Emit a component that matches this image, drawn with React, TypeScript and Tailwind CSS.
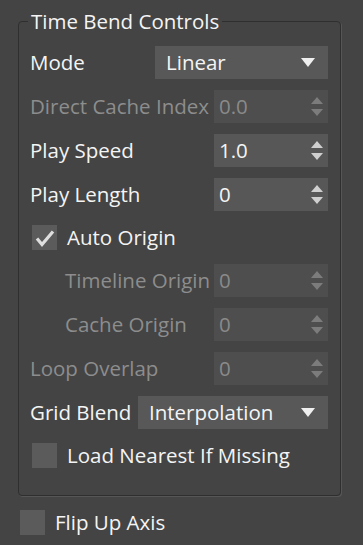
import React from 'react';

const SpinArrows = ({ dim }: { dim?: boolean }) => (
  <svg width="12" height="19" viewBox="0 0 12 19" className={dim ? 'fill-[#7c7c7c]' : 'fill-[#cfcfcf]'}>
    <polygon points="6,0 12,7 0,7" />
    <polygon points="0,12 12,12 6,19" />
  </svg>
);

const DropArrow = () => (
  <svg width="14" height="9" viewBox="0 0 14 9" className="fill-[#efefef]">
    <polygon points="0,0 14,0 7,9" />
  </svg>
);

function Spinner({ label, value, disabled, indent }: { label: string; value: string; disabled?: boolean; indent?: boolean }) {
  return (
    <div className="flex h-[33px] items-center">
      <span className={`flex-1 whitespace-nowrap ${indent ? 'pl-[35px]' : ''} ${disabled ? 'text-[#8d8d8d]' : 'text-[#f4f4f4]'}`}>
        {label}
      </span>
      <div className={`flex h-[33px] w-[114px] items-center justify-between pl-[5px] pr-[5px] ${disabled ? 'bg-[#4e4e4e] text-[#8a8a8a]' : 'bg-[#575757] text-[#f4f4f4]'}`}>
        <span>{value}</span>
        <SpinArrows dim={disabled} />
      </div>
    </div>
  );
}

function Dropdown({ label, value, width }: { label: string; value: string; width: string }) {
  return (
    <div className="flex h-[33px] items-center">
      <span className="flex-1 whitespace-nowrap text-[#f4f4f4]">{label}</span>
      <div className={`flex h-[33px] ${width} items-center justify-between bg-[#585858] pl-[11px] pr-[13px] text-[#f4f4f4]`}>
        <span>{value}</span>
        <DropArrow />
      </div>
    </div>
  );
}

function Check({ label, checked }: { label: string; checked?: boolean }) {
  return (
    <div className="flex h-[31px] items-center gap-[10px] pl-[2px]">
      <div className="flex h-[25px] w-[25px] items-center justify-center bg-[#5b5b5b]">
        {checked && (
          <svg width="25" height="25" viewBox="0 0 25 25">
            <path d="M5 13.5 L10 19.5 L21 6.5" fill="none" stroke="#dedede" strokeWidth="3.2" strokeLinejoin="miter" />
          </svg>
        )}
      </div>
      <span className="whitespace-nowrap text-[#f4f4f4]">{label}</span>
    </div>
  );
}

export default function App() {
  return (
    <div className="h-[545px] w-[363px] bg-[#444444] pt-[8px] font-['Open_Sans',sans-serif] text-[20.5px]">
      <fieldset className="ml-[18px] w-[323px] rounded-[4px] border border-[#2f2f2f] pb-[24px] pl-[11px] pr-[12px] shadow-[1px_1px_0_#565656]">
        <legend className="ml-[-2px] px-[3px] leading-[26px] text-[#f4f4f4]">Time Bend Controls</legend>
        <div className="flex flex-col gap-[11px] pt-[12px]">
          <Dropdown label="Mode" value="Linear" width="w-[173px]" />
          <Spinner label="Direct Cache Index" value="0.0" disabled />
          <Spinner label="Play Speed" value="1.0" />
          <Spinner label="Play Length" value="0" />
          <Check label="Auto Origin" checked />
          <Spinner label="Timeline Origin" value="0" disabled indent />
          <Spinner label="Cache Origin" value="0" disabled indent />
          <Spinner label="Loop Overlap" value="0" disabled />
          <Dropdown label="Grid Blend" value="Interpolation" width="w-[190px]" />
          <Check label="Load Nearest If Missing" />
        </div>
      </fieldset>
      <div className="ml-[20px] mt-[14px] flex h-[25px] items-center gap-[10px]">
        <div className="h-[25px] w-[25px] bg-[#5b5b5b]" />
        <span className="text-[#f4f4f4]">Flip Up Axis</span>
      </div>
    </div>
  );
}
